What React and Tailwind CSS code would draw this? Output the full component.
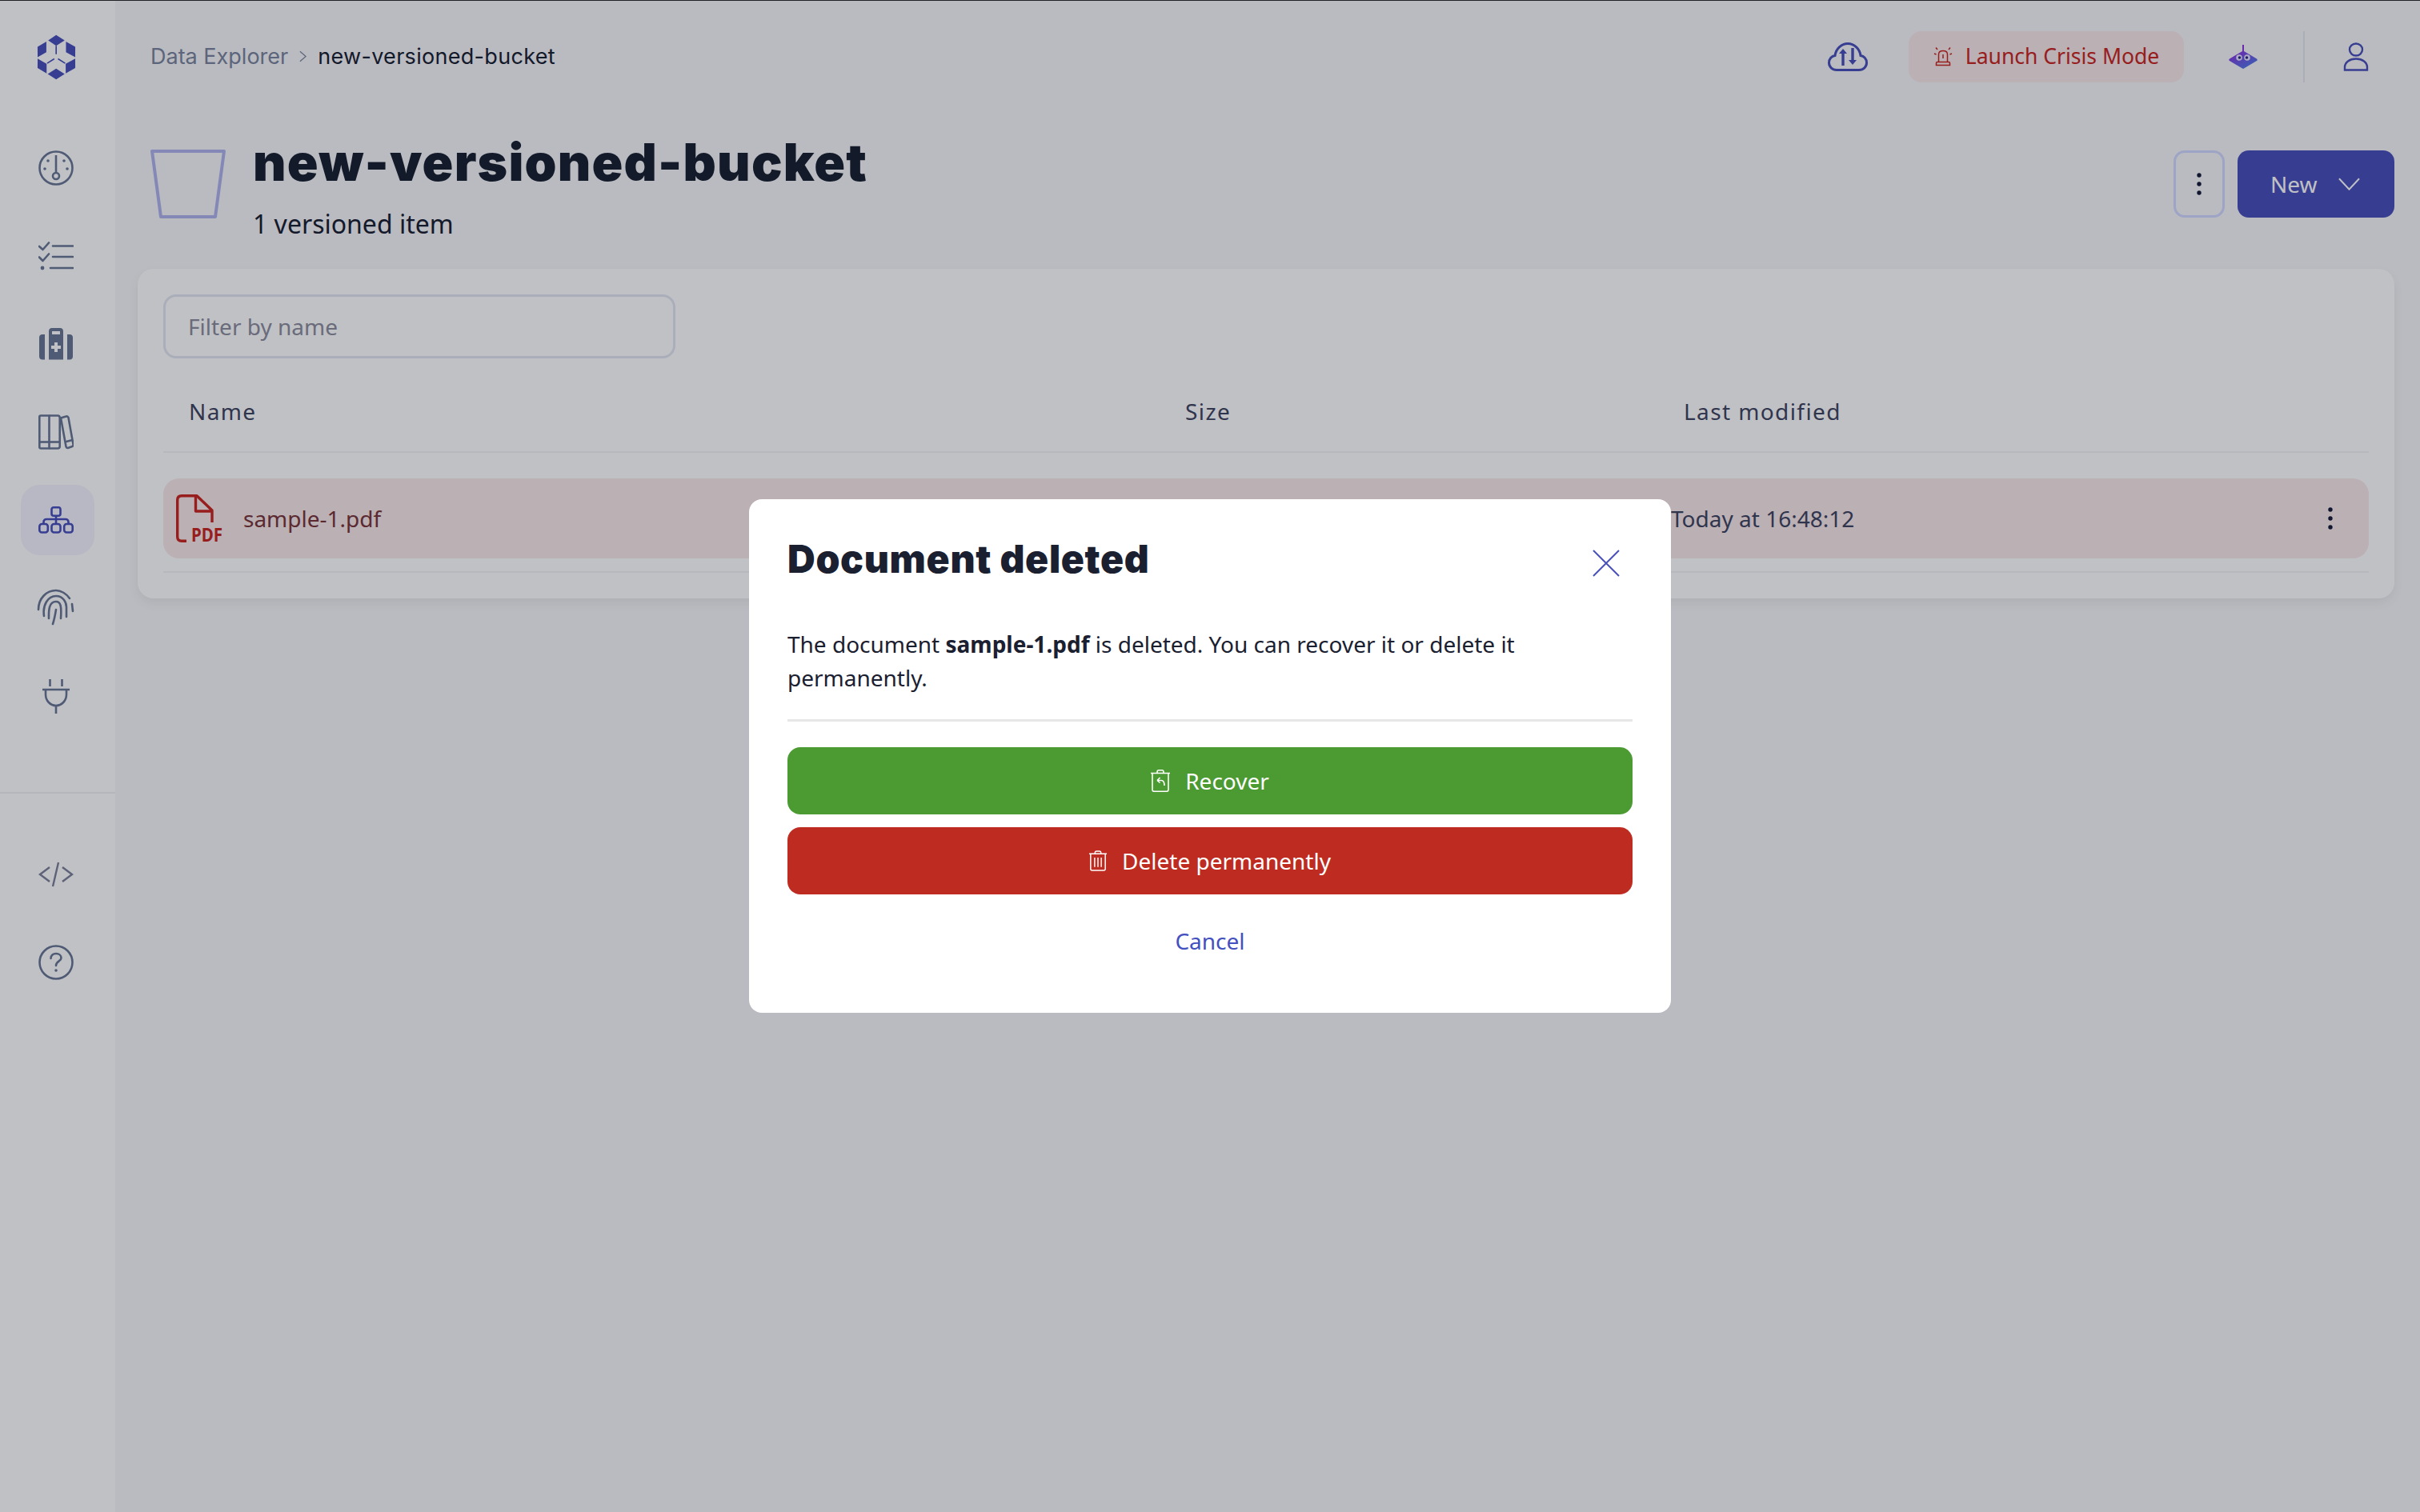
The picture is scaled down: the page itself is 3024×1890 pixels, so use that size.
const slate = '#697795'
const indigo = '#4851bb'
const alert = '#c8261f'

const Logo = () => (
  <svg viewBox="78 63 146 172" className="w-[49px] h-[57px]" fill={indigo}>
    <path d="M150 65 182 86 150 106 120 86Z" />
    <path d="M80 110 113 90V130L80 149Z" />
    <path d="M187 90 222 110V149L187 130Z" />
    <path d="M80 154 114 174V210L80 190Z" />
    <path d="M222 154 186 174V210L222 190Z" />
    <path d="M150 192 182 212 150 233 118 212Z" />
    <path d="M150 106V138M116 172 143 155M184 172 157 155" stroke={indigo} strokeWidth="5" fill="none" />
  </svg>
)

const Gauge = () => (
  <svg viewBox="0 0 44 44" className="w-11 h-11" fill="none" stroke={slate} strokeWidth="2.6">
    <circle cx="22" cy="22" r="20.5" />
    <path d="M22 6V28" />
    <circle cx="22" cy="32" r="4" />
    <g fill={slate} stroke="none">
      <circle cx="12" cy="13" r="1.8" />
      <circle cx="32" cy="13" r="1.8" />
      <circle cx="8" cy="23" r="1.8" />
      <circle cx="36" cy="23" r="1.8" />
    </g>
  </svg>
)

const Checklist = () => (
  <svg viewBox="0 0 44 36" className="w-11 h-9" fill="none" stroke={slate} strokeWidth="2.6" strokeLinecap="round" strokeLinejoin="round">
    <path d="M1 6 5.5 10 13 1.5M1 19.5 5.5 24 13 15.5" />
    <path d="M18 5.5H43M18 19H43M15 33H43" />
    <circle cx="5" cy="33" r="2.4" fill={slate} stroke="none" />
  </svg>
)

const Bag = () => (
  <svg viewBox="0 0 42 40" className="w-[42px] h-10" fill={slate}>
    <path d="M7 8V39.5H4C1.5 39.5 0 38 0 35.500V12C0 9.500 1.500 8 4 8Z" />
    <path d="M35 8V39.500H38C40.500 39.500 42 38 42 35.500V12C42 9.500 40.500 8 38 8Z" />
    <path fillRule="evenodd" d="M16 0H26C28.500 0 30 1.500 30 4V39.500H12V4C12 1.500 13.500 0 16 0ZM16 4V8H26V4ZM19 18V22H15V26H19V30H23V26H27V22H23V18Z" />
  </svg>
)

const Books = () => (
  <svg viewBox="0 0 44 44" className="w-11 h-11" fill="none" stroke={slate} strokeWidth="2.6" strokeLinejoin="round">
    <path d="M3 1.500H13.500V42.500H3C2 42.500 1.300 41.800 1.300 41V3C1.300 2.200 2 1.500 3 1.500Z" />
    <path d="M13.500 1.500H24C25.500 1.500 26.700 2.500 26.700 4V40C26.700 41.500 25.500 42.500 24 42.500H13.500" />
    <path d="M1.300 34.500H26.700" />
    <path d="M28 4.500 34.500 2.500C36 2 37 2.800 37.500 4L43.500 37.500C43.800 39 43 40 41.800 40.300L37.500 41.800C36 42.300 35 41.500 34.500 40.200Z" />
    <path d="M33 34.500 42.500 32" />
  </svg>
)

const Sitemap = () => (
  <svg viewBox="0 0 44 34" className="w-11 h-[34px]" fill="none" stroke={indigo} strokeWidth="2.600" strokeLinejoin="round">
    <rect x="16.500" y="1.300" width="11" height="10.500" rx="2.500" />
    <rect x="1.300" y="22" width="10.500" height="10.500" rx="3" />
    <rect x="16.500" y="22" width="11" height="10.500" rx="3" />
    <rect x="32.200" y="22" width="10.500" height="10.500" rx="3" />
    <path d="M22 11.800V22M6.500 22V19.500C6.500 17.500 8 16 10 16H34C36 16 37.500 17.500 37.500 19.500V22" />
  </svg>
)

const Fingerprint = () => (
  <svg viewBox="-2 -2 48 48" className="w-12 h-12" fill="none" stroke={slate} strokeWidth="2.600" strokeLinecap="round">
    <path d="M0 24C0 10 10 0 22 0 28 0 35 4 39 10" />
    <path d="M42 17 43 26" />
    <path d="M7 32C5 18 12 7 22 7 31 7 35 15 35 21V33" />
    <path d="M13 35C13 28 12 14 22 14 28 14 29 20 28 35" />
    <path d="M22 24C21 30 20 36 18 42" />
  </svg>
)

const Plug = () => (
  <svg viewBox="0 0 34 44" className="w-[34px] h-11" fill="none" stroke={slate} strokeWidth="2.600">
    <path d="M9.500 1V10M24.500 1V10" />
    <path d="M0 14H34" />
    <path d="M4 14V20C4 28 10 34 17 34 24 34 30 28 30 20V14" />
    <path d="M17 34V44" />
  </svg>
)

const CodeTag = () => (
  <svg viewBox="0 0 44 32" className="w-11 h-8" fill="none" stroke="#7d8098" strokeWidth="2.400">
    <path d="M14 7 2 16 14 25M30 7 42 16 30 25M25 1 18 31" />
  </svg>
)

const Help = () => (
  <svg viewBox="0 0 44 44" className="w-11 h-11" fill="none" stroke={slate} strokeWidth="2.600" strokeLinecap="round">
    <circle cx="22" cy="22" r="20.500" />
    <path d="M15.500 17C15.500 13 18.500 11 22 11 26 11 28.500 13.500 28.500 16.500 28.500 20.500 22 20.500 22 26" />
    <circle cx="22" cy="32" r="1.800" fill={slate} stroke="none" />
  </svg>
)

const Cloud = () => (
  <svg viewBox="0 0 50 36" className="w-[50px] h-9" fill="none" stroke={indigo} strokeWidth="3">
    <path d="M11 34.500H39C44.500 34.500 48.500 30.500 48.500 25.500 48.500 20.500 45 17 41 16.500 40 8 33 1.500 25 1.500 17 1.500 10 8 9 16.500 5 17 1.500 20.500 1.500 25.500 1.500 30.500 5.500 34.500 11 34.500Z" />
    <path d="M19 29V11M31 7V25" strokeWidth="3.400" />
    <path d="M14 14 19 8 24 14ZM26 22 31 28 36 22Z" fill={indigo} stroke="none" />
  </svg>
)

const Siren = () => (
  <svg viewBox="0 0 24 26" className="w-6 h-[26px]" fill="none" stroke={alert} strokeWidth="1.500">
    <path d="M6.500 19V10C6.500 7 9 5.500 12 5.500 15 5.500 17.500 7 17.500 10V19" />
    <path d="M3.500 23.500V21C3.500 20 4 19.500 5 19.500H19C20 19.500 20.500 20 20.500 21V23.500Z" />
    <path d="M12 10V15M1 9 3.500 10M23 9 20.500 10M3 1.500 5 4M21 1.500 19 4" />
  </svg>
)

const Bot = () => (
  <svg viewBox="0 0 36 30" className="w-9 h-[30px]">
    <defs>
      <linearGradient id="bot" x1="0.2" y1="0" x2="0.8" y2="1">
        <stop offset="0" stopColor="#a020e0" />
        <stop offset="1" stopColor="#4a80e8" />
      </linearGradient>
    </defs>
    <path d="M17 0H19V8L35 17.500C36 18.500 36 19.500 35 20L19 29.500C18.300 30 17.700 30 17 29.500L1 20C0 19.500 0 18.500 1 17.500L17 8Z" fill="url(#bot)" />
    <circle cx="13" cy="16" r="3.800" fill="#e8e4ff" />
    <circle cx="23" cy="16" r="3.800" fill="#e8e4ff" />
    <circle cx="13.500" cy="16" r="1.800" fill="#2a2a80" />
    <circle cx="22.500" cy="16" r="1.800" fill="#2a2a80" />
  </svg>
)

const UserIcon = () => (
  <svg viewBox="0 0 32 36" className="w-8 h-9" fill="none" stroke={indigo} strokeWidth="2.400">
    <ellipse cx="16" cy="9" rx="8" ry="7.500" />
    <path d="M2 34.500V31C2 25 8 20.500 16 20.500 24 20.500 30 25 30 31V34.500Z" />
  </svg>
)

const Chevron = ({ className, color }) => (
  <svg viewBox="0 0 28 16" className={className} fill="none" stroke={color} strokeWidth="2">
    <path d="M1 1 14 15 27 1" />
  </svg>
)

const Kebab = ({ color = '#141a38' }) => (
  <svg viewBox="0 0 8 30" className="w-2 h-[30px]" fill={color}>
    <circle cx="4" cy="4" r="2.700" />
    <circle cx="4" cy="15" r="2.700" />
    <circle cx="4" cy="26" r="2.700" />
  </svg>
)

const PdfIcon = () => (
  <svg viewBox="0 0 58 60" className="w-[58px] h-[60px] overflow-visible" fill="none" stroke={alert} strokeWidth="3.400" strokeLinejoin="round">
    <path d="M45 35V20L26 1.700H7C3.500 1.700 1.700 3.500 1.700 7V53C1.700 56.500 3.500 58.300 7 58.300H13" />
    <path d="M24.500 1.700V21H45" />
    <text x="19" y="59" fontFamily="Noto Sans, sans-serif" fontWeight="700" fontSize="23" fill={alert} stroke="none" textLength="39" lengthAdjust="spacingAndGlyphs">PDF</text>
  </svg>
)

const TrashRecover = () => (
  <svg viewBox="0 0 24 28" className="w-6 h-7" fill="none" stroke="#fff" strokeWidth="1.600" strokeLinejoin="round">
    <path d="M0 4.500H24M8 4.500V3C8 1.500 9 .8 10 .8H14C15 .8 16 1.500 16 3V4.500" />
    <path d="M2 4.500V25C2 26.500 3 27.200 4 27.200H20C21 27.200 22 26.500 22 25V4.500" />
    <path d="M8 13.500 11.500 10M8 13.500 11.500 16.500M8 13.500H13C15.500 13.500 17 15.500 17 20" />
  </svg>
)

const TrashDelete = () => (
  <svg viewBox="0 0 24 28" className="w-[22px] h-7" fill="none" stroke="#fff" strokeWidth="1.600" strokeLinejoin="round">
    <path d="M0 4.500H24M8 4.500V3C8 1.500 9 .8 10 .8H14C15 .8 16 1.500 16 3V4.500" />
    <path d="M2 4.500V25C2 26.500 3 27.200 4 27.200H20C21 27.200 22 26.500 22 25V4.500" />
    <path d="M7.500 9.500V22.500M12 9.500V22.500M16.500 9.500V22.500" />
  </svg>
)

const Close = () => (
  <svg viewBox="0 0 34 34" className="w-[34px] h-[34px]" fill="none" stroke={indigo} strokeWidth="2">
    <path d="M1 1 33 33M33 1 1 33" />
  </svg>
)

const Bucket = () => (
  <svg viewBox="0 0 94 86" className="w-[94px] h-[86px] mt-[47px] shrink-0" fill="none" stroke="#afb3ed" strokeWidth="4" strokeLinejoin="round">
    <path d="M2 2H92L81 84H13Z" />
  </svg>
)

function NavItem({ children, active }) {
  return (
    <div className="h-[110px] flex items-center justify-center">
      <div className={`w-[92px] h-[88px] pr-1 rounded-3xl flex items-center justify-center ${active ? 'bg-[#f3f3fc]' : ''}`}>
        {children}
      </div>
    </div>
  )
}

function Sidebar() {
  return (
    <aside className="w-[144px] shrink-0 bg-white flex flex-col">
      <div className="h-[154px] pb-[14px] pr-1 flex items-center justify-center">
        <Logo />
      </div>
      <nav className="flex flex-col px-[24px]">
        <NavItem><Gauge /></NavItem>
        <NavItem><Checklist /></NavItem>
        <NavItem><Bag /></NavItem>
        <NavItem><Books /></NavItem>
        <NavItem active><Sitemap /></NavItem>
        <NavItem><Fingerprint /></NavItem>
        <NavItem><Plug /></NavItem>
      </nav>
      <div className="mt-[65px] border-t-2 border-[#f0f1f3] pt-[46px] px-[24px]">
        <NavItem><CodeTag /></NavItem>
        <NavItem><Help /></NavItem>
      </div>
    </aside>
  )
}

function Topbar() {
  return (
    <header className="h-[139px] pl-[44px] pr-[64px] flex items-center justify-between">
      <div className="flex items-center font-['Inter',sans-serif] text-[27px] leading-10">
        <span className="text-[#7a849c]">Data Explorer</span>
        <svg viewBox="0 0 10 16" className="w-[9px] h-[15px] mx-[14px]" fill="none" stroke="#7a849c" strokeWidth="1.400">
          <path d="M1 1 9 8 1 15" />
        </svg>
        <span className="text-[#182031] tracking-[0.3px]">new-versioned-bucket</span>
      </div>
      <div className="flex items-center">
        <Cloud />
        <button className="ml-[51px] h-16 w-[344px] rounded-2xl bg-[#f8e8e9] flex items-center justify-center gap-[16px] text-[26.500px] text-[#c8261f]">
          <Siren />
          Launch Crisis Mode
        </button>
        <div className="ml-[56px]"><Bot /></div>
        <div className="ml-[57px] w-[2px] h-16 bg-[#e4e6ec]" />
        <div className="ml-[48px]"><UserIcon /></div>
      </div>
    </header>
  )
}

function PageHeader() {
  return (
    <div className="h-[196px] pl-[44px] pr-8 flex justify-between items-start">
      <div className="flex gap-[34px]">
        <Bucket />
        <div className="pt-[27px]">
          <h1 className="font-['Inter',sans-serif] font-black text-[64px] leading-[72px] text-[#182031] tracking-[1.200px]">new-versioned-bucket</h1>
          <p className="mt-[21px] text-[32px] leading-10 text-[#182031]">1 versioned item</p>
        </div>
      </div>
      <div className="mt-[48px] flex gap-4">
        <button className="w-16 h-[84px] rounded-[14px] border-[3px] border-[#d1d9ff] flex items-center justify-center">
          <Kebab />
        </button>
        <button className="w-[196px] h-[84px] rounded-[14px] bg-[#4851bb] flex items-center pl-[41px] gap-[26px] text-[28px] text-white">
          New
          <Chevron className="w-[27px] h-[16px]" color="#fff" />
        </button>
      </div>
    </div>
  )
}

function BucketTable() {
  return (
    <section className="ml-[28px] mr-8 h-[412px] rounded-[20px] bg-white shadow-[0_6px_14px_rgba(0,0,0,0.06)] px-8 pt-8">
      <input
        placeholder="Filter by name"
        className="block w-[640px] h-[80px] rounded-2xl border-[3px] border-[#e2e6f0] px-[28px] text-[28px] placeholder:text-[#8c8c9c] outline-none bg-transparent"
      />
      <div className="h-[118px] pt-[46px] pl-8 border-b-2 border-[#f2f3f5] grid grid-cols-[1245px_623px_1fr] text-[28px] leading-10 tracking-[1.400px] text-[#3f4460]">
        <span>Name</span>
        <span>Size</span>
        <span>Last modified</span>
      </div>
      <div className="mt-8 h-[100px] rounded-[20px] bg-[#f8e8e9] grid grid-cols-[1868px_1fr_auto] items-center pl-4 pr-[44px] text-[28px] leading-10">
        <div className="flex items-center gap-[26px] text-[#793538]">
          <PdfIcon />
          <span>sample-1.pdf</span>
        </div>
        <span className="text-[#3f4460]">Today at 16:48:12</span>
        <Kebab />
      </div>
      <div className="mt-4 border-b-2 border-[#f2f3f5]" />
    </section>
  )
}

function DeletedModal() {
  return (
    <div className="absolute inset-0 bg-[rgb(4,8,24)]/25 flex items-center justify-center">
      <div className="w-[1152px] h-[642px] rounded-2xl bg-white px-12 pt-[39px]">
        <div className="flex items-start justify-between">
          <h2 className="font-['Inter',sans-serif] font-black text-[48px] leading-[72px] text-[#1a2030] tracking-[0.700px]">Document deleted</h2>
          <button className="mt-[24px] mr-4"><Close /></button>
        </div>
        <p className="mt-[49px] text-[28px] leading-[42px] text-[#1a2030]">
          The document <strong className="font-bold">sample-1.pdf</strong> is deleted. You can recover it or delete it permanently.
        </p>
        <div className="mt-[31px] border-t-[3px] border-[#e6e6e6]" />
        <button className="mt-[32px] w-full h-[84px] rounded-2xl bg-[#4b9a32] flex items-center justify-center gap-[19px] text-[28px] text-white">
          <TrashRecover />
          Recover
        </button>
        <button className="mt-4 w-full h-[84px] rounded-2xl bg-[#be2c21] flex items-center justify-center gap-[19px] text-[28px] text-white">
          <TrashDelete />
          Delete permanently
        </button>
        <button className="block mx-auto mt-[38px] text-[28px] leading-10 text-[#4350bf]">Cancel</button>
      </div>
    </div>
  )
}

export default function App() {
  return (
    <div className="relative h-screen overflow-hidden bg-[#f7f7f8] font-['Noto_Sans',sans-serif]">
      <div className="h-px bg-[#2a2a2a]" />
      <div className="flex h-[calc(100%-1px)]">
        <Sidebar />
        <main className="flex-1 min-w-0">
          <Topbar />
          <PageHeader />
          <BucketTable />
        </main>
      </div>
      <DeletedModal />
    </div>
  )
}
